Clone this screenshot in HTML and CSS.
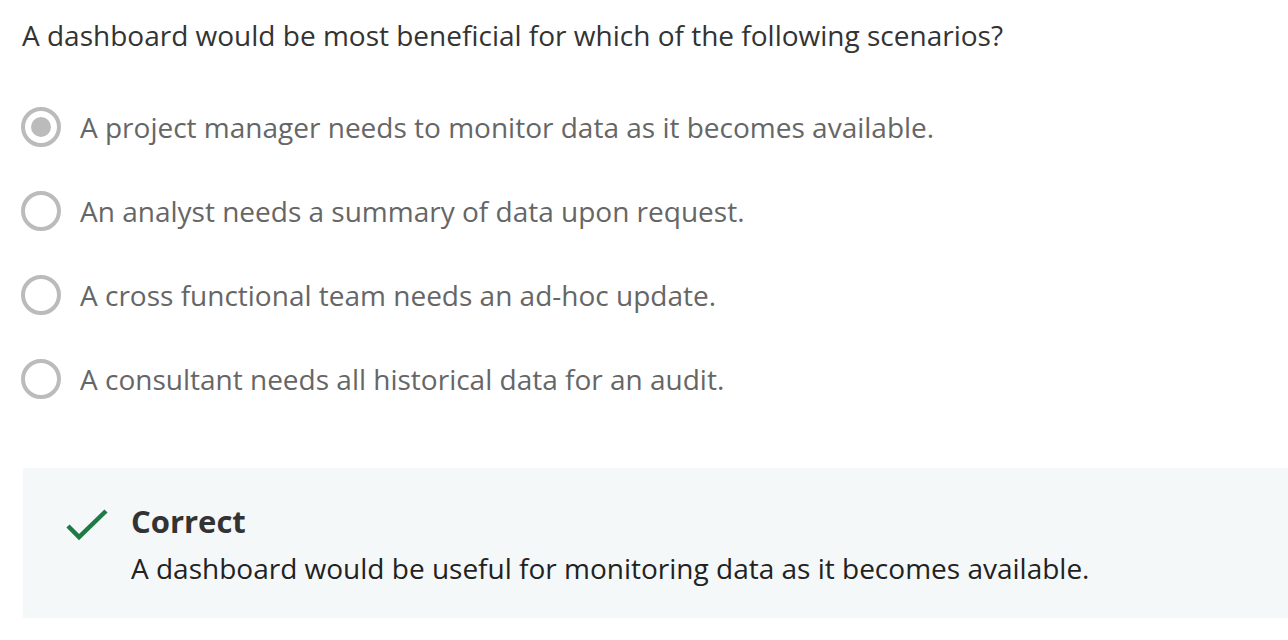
FILE: index.html
```html
<!DOCTYPE html>
<html>
<head>
<meta charset="utf-8">
<link rel="stylesheet" href="styles.css">
</head>
<body>
<div class="page">
  <p class="question">A dashboard would be most beneficial for which of the following scenarios?</p>
  <ul class="options">
    <li class="option"><span class="radio checked"></span><span class="label">A project manager needs to monitor data as it becomes available.</span></li>
    <li class="option"><span class="radio"></span><span class="label">An analyst needs a summary of data upon request.</span></li>
    <li class="option"><span class="radio"></span><span class="label">A cross functional team needs an ad-hoc update.</span></li>
    <li class="option"><span class="radio"></span><span class="label">A consultant needs all historical data for an audit.</span></li>
  </ul>
  <div class="feedback">
    <svg class="check" width="42" height="32" viewBox="0 0 42 32"><path d="M2 17 L13 28 L40 2" fill="none" stroke="#1f7a45" stroke-width="4.5"/></svg>
    <div class="fb-text">
      <div class="fb-title">Correct</div>
      <div class="fb-body">A dashboard would be useful for monitoring data as it becomes available.</div>
    </div>
  </div>
</div>
</body>
</html>
```
FILE: styles.css
```css
html, body { margin: 0; padding: 0; background: #fff; }
body { font-family: "Open Sans", "Noto Sans", sans-serif; overflow: hidden; }
.page { padding: 15px 0 0 22px; }
.question { margin: 0; font-size: 28px; line-height: 40px; color: #333; }
.options { list-style: none; margin: 30px 0 0 0; padding: 0; }
.option { display: flex; align-items: center; height: 84px; }
.radio { width: 32px; height: 32px; border: 4px solid #bbb; border-radius: 50%; box-sizing: content-box; flex: none; display: flex; align-items: center; justify-content: center; margin-left: -1px; }
.radio.checked::after { content: ""; width: 20px; height: 20px; border-radius: 50%; background: #bbb; }
.label { margin-left: 19px; font-size: 28px; color: #666; }
.feedback { margin: 47px 0 0 1px; width: 1300px; height: 150px; background: #f5f8f8; display: flex; box-sizing: border-box; padding: 35px 0 0 43px; }
.check { flex: none; margin-top: 6px; }
.fb-text { margin-left: 23px; }
.fb-title { font-size: 31px; font-weight: 700; color: #333; line-height: 36px; }
.fb-body { font-size: 28px; color: #222; line-height: 42px; margin-top: 8px; }
```
